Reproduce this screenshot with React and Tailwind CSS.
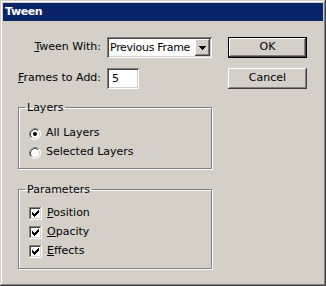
import React from "react";

const raised =
  "shadow-[inset_-1px_-1px_#404040,inset_1px_1px_#ffffff,inset_-2px_-2px_#808080,inset_2px_2px_#d4d0c8]";
const sunken =
  "shadow-[inset_1px_1px_#808080,inset_-1px_-1px_#ffffff,inset_2px_2px_#404040,inset_-2px_-2px_#d4d0c8]";

// classic check mark, one rect per run of pixels
const checkPx = [
  [6, 0, 1], [5, 1, 2], [0, 2, 1], [4, 2, 3], [0, 3, 2], [3, 3, 3],
  [0, 4, 5], [1, 5, 3], [2, 6, 1],
];

function CheckBox() {
  return (
    <svg width="13" height="13" viewBox="0 0 13 13" shapeRendering="crispEdges" className="shrink-0">
      <rect x="0" y="0" width="13" height="13" fill="#ffffff" />
      <rect x="0" y="0" width="12" height="1" fill="#808080" />
      <rect x="0" y="0" width="1" height="12" fill="#808080" />
      <rect x="1" y="1" width="10" height="1" fill="#404040" />
      <rect x="1" y="1" width="1" height="10" fill="#404040" />
      <rect x="1" y="11" width="11" height="1" fill="#d4d0c8" />
      <rect x="11" y="1" width="1" height="11" fill="#d4d0c8" />
      {checkPx.map(([x, y, w], i) => (
        <rect key={i} x={3 + x} y={3 + y} width={w} height="1" fill="#000000" />
      ))}
    </svg>
  );
}

function Radio({ on }) {
  return (
    <svg width="12" height="12" viewBox="0 0 12 12" className="shrink-0">
      <circle cx="6" cy="6" r="5.5" fill="#ffffff" />
      <path d="M2.11 9.89 A5.5 5.5 0 0 1 9.89 2.11" stroke="#808080" fill="none" />
      <path d="M9.89 2.11 A5.5 5.5 0 0 1 2.11 9.89" stroke="#ffffff" fill="none" />
      <path d="M2.82 9.18 A4.5 4.5 0 0 1 9.18 2.82" stroke="#404040" fill="none" />
      <path d="M9.18 2.82 A4.5 4.5 0 0 1 2.82 9.18" stroke="#d4d0c8" fill="none" />
      {on && <circle cx="6" cy="6" r="2" fill="#000000" />}
    </svg>
  );
}

function Combo() {
  return (
    <div className={`h-[21px] w-[105px] bg-white p-[2px] flex ${sunken}`}>
      <div className="flex-1 overflow-hidden whitespace-nowrap pl-[1px] leading-[17px] tracking-[-0.3px]">
        Previous Frame
      </div>
      <div className={`w-[15px] h-[17px] bg-[#d4d0c8] flex items-center justify-center ${raised}`}>
        <svg width="7" height="4" viewBox="0 0 7 4" shapeRendering="crispEdges">
          <path d="M0 0h7v1h-1v1h-1v1h-1v1h-1v-1h-1v-1h-1v-1h-1z" fill="#000000" />
        </svg>
      </div>
    </div>
  );
}

function Group({ title, pad, children }) {
  return (
    <fieldset className={`border border-[#808080] shadow-[1px_1px_0_#ffffff,inset_1px_1px_0_#ffffff] pl-[6px] ${pad}`}>
      <legend className="px-[2px] leading-[13px]">{title}</legend>
      <div className="flex flex-col pl-[4px]">{children}</div>
    </fieldset>
  );
}

function Row({ children }) {
  return <div className="h-[19px] flex items-center gap-[5px]">{children}</div>;
}

export default function App() {
  return (
    <div className="w-[326px] h-[286px] bg-[#d4d0c8] p-[3px] flex flex-col text-[11px] text-black font-['DejaVu_Sans',sans-serif] shadow-[inset_-1px_-1px_#404040,inset_1px_1px_#d4d0c8,inset_-2px_-2px_#808080,inset_2px_2px_#ffffff]">
      <div className="h-[18px] bg-[#0a246a] text-white font-bold pl-[2px] flex items-center tracking-[-0.4px]">
        Tween
      </div>

      <div className="flex pt-[16px] pl-[15px]">
        <div className="w-[194px] flex flex-col">
          <div className="grid grid-cols-[89px_105px] gap-y-[10px] items-center">
            <label className="text-right pr-[6px] whitespace-nowrap">
              <u>T</u>ween With:
            </label>
            <Combo />
            <label className="text-right pr-[6px] whitespace-nowrap">
              <u>F</u>rames to Add:
            </label>
            <div className={`h-[21px] w-[32px] bg-white pl-[5px] leading-[21px] ${sunken}`}>5</div>
          </div>

          <div className="mt-[12px]">
            <Group title="Layers" pad="pt-[10px] pb-[6px]">
              <Row>
                <Radio on />
                <span>All Layers</span>
              </Row>
              <Row>
                <Radio />
                <span>Selected Layers</span>
              </Row>
            </Group>
          </div>

          <div className="mt-[14px]">
            <Group title="Parameters" pad="pt-[8px] pb-[7px]">
              <Row>
                <CheckBox />
                <span><u>P</u>osition</span>
              </Row>
              <Row>
                <CheckBox />
                <span><u>O</u>pacity</span>
              </Row>
              <Row>
                <CheckBox />
                <span><u>E</u>ffects</span>
              </Row>
            </Group>
          </div>
        </div>

        <div className="ml-[16px] flex flex-col gap-[10px]">
          <button className="w-[79px] h-[21px] border border-black bg-[#d4d0c8] p-0">
            <div className={`w-full h-full flex items-center justify-center ${raised}`}>OK</div>
          </button>
          <button className={`w-[79px] h-[21px] bg-[#d4d0c8] flex items-center justify-center ${raised}`}>
            Cancel
          </button>
        </div>
      </div>
    </div>
  );
}
